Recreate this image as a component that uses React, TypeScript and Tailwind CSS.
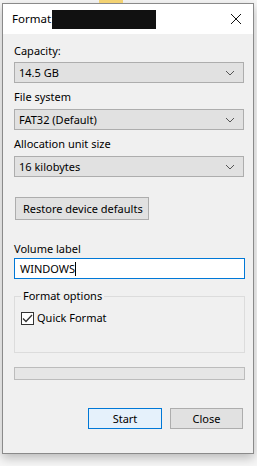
import React from "react";

const FONT = { fontFamily: '"Noto Sans", "Open Sans", Arial, sans-serif' };

function Chevron() {
  return (
    <svg width="10" height="6" viewBox="0 0 10 6" className="shrink-0">
      <path d="M1 1 L5 5 L9 1" fill="none" stroke="#555" strokeWidth="1" />
    </svg>
  );
}

function Combo({ value }: { value: string }) {
  return (
    <div className="h-[21px] w-[230px] border border-[#adadad] bg-[#e1e1e1] flex items-center justify-between pl-[4px] pr-[8px] text-[11px] text-black">
      <span className="leading-none">{value}</span>
      <Chevron />
    </div>
  );
}

export default function App() {
  return (
    <div className="w-[257px] h-[466px] bg-[#f7f7f7] overflow-hidden relative" style={FONT}>
      {/* explorer remnants behind dialog */}
      <div className="h-[3px] overflow-hidden flex">
        <div className="ml-[99px] w-[24px] h-[3px] bg-[#f3d272]" />
        <div className="ml-[20px] -mt-[11px] text-[11px] leading-[14px] text-[#333]">Pictures</div>
      </div>
      <div className="ml-[2px] w-[252px] h-[451px] border border-[#8a8a8a] bg-[#f0f0f0] flex flex-col shadow-[0_4px_10px_rgba(0,0,0,0.25)]">
        <div className="h-[30px] bg-white flex items-center pl-[9px] pr-[8px] shrink-0">
          <span className="text-[11.5px] text-black">Format</span>
          <div className="ml-[1px] w-[104px] h-[19px] bg-[#111]" />
          <svg width="12" height="12" viewBox="0 0 12 12" className="ml-auto mr-[3px]">
            <path d="M1 1 L11 11 M11 1 L1 11" stroke="#111" strokeWidth="1" />
          </svg>
        </div>
        <div className="pl-[11px] flex flex-col text-[11px] text-black">
          <div className="mt-[9px] h-[16px] leading-[16px]">Capacity:</div>
          <div className="mt-[3px]"><Combo value="14.5 GB" /></div>
          <div className="mt-[6px] h-[16px] leading-[16px]">File system</div>
          <div className="mt-[4px]"><Combo value="FAT32 (Default)" /></div>
          <div className="mt-[6px] h-[16px] leading-[16px]">Allocation unit size</div>
          <div className="mt-[4px]"><Combo value="16 kilobytes" /></div>
          <button className="mt-[20px] ml-[1px] h-[23px] w-[134px] border border-[#adadad] bg-[#e1e1e1] text-[11px] text-black text-left pl-[7px] leading-none whitespace-nowrap">
            Restore device defaults
          </button>
          <div className="mt-[21px] h-[16px] leading-[16px]">Volume label</div>
          <div className="mt-[1px] h-[21px] w-[231px] border border-[#0078d7] bg-white flex items-center pl-[5px]">
            <span className="leading-none">WINDOWS</span>
            <span className="w-[1px] h-[14px] bg-black" />
          </div>
          <div className="mt-[17px] relative h-[57px] w-[231px] border border-[#dcdcdc]">
            <span className="absolute -top-[9px] left-[6px] bg-[#f0f0f0] px-[2px] leading-[16px]">Format options</span>
            <div className="mt-[13px] ml-[6px] flex items-center gap-[3px]">
              <div className="w-[13px] h-[13px] border border-[#333] bg-white flex items-center justify-center">
                <svg width="11" height="9" viewBox="0 0 11 9">
                  <path d="M1 4.5 L4 7.5 L10 1" fill="none" stroke="#333" strokeWidth="1.3" />
                </svg>
              </div>
              <span className="leading-[16px]">Quick Format</span>
            </div>
          </div>
          <div className="mt-[14px] h-[13px] w-[231px] border border-[#bcbcbc] bg-[#e6e6e6]" />
          <div className="mt-[28px] flex gap-[8px] ml-[74px]">
            <button className="h-[21px] w-[74px] border border-[#0078d7] bg-[#e5f1fb] text-[11px] text-black leading-none">
              Start
            </button>
            <button className="h-[21px] w-[73px] border border-[#adadad] bg-[#e1e1e1] text-[11px] text-black leading-none">
              Close
            </button>
          </div>
        </div>
      </div>
    </div>
  );
}
